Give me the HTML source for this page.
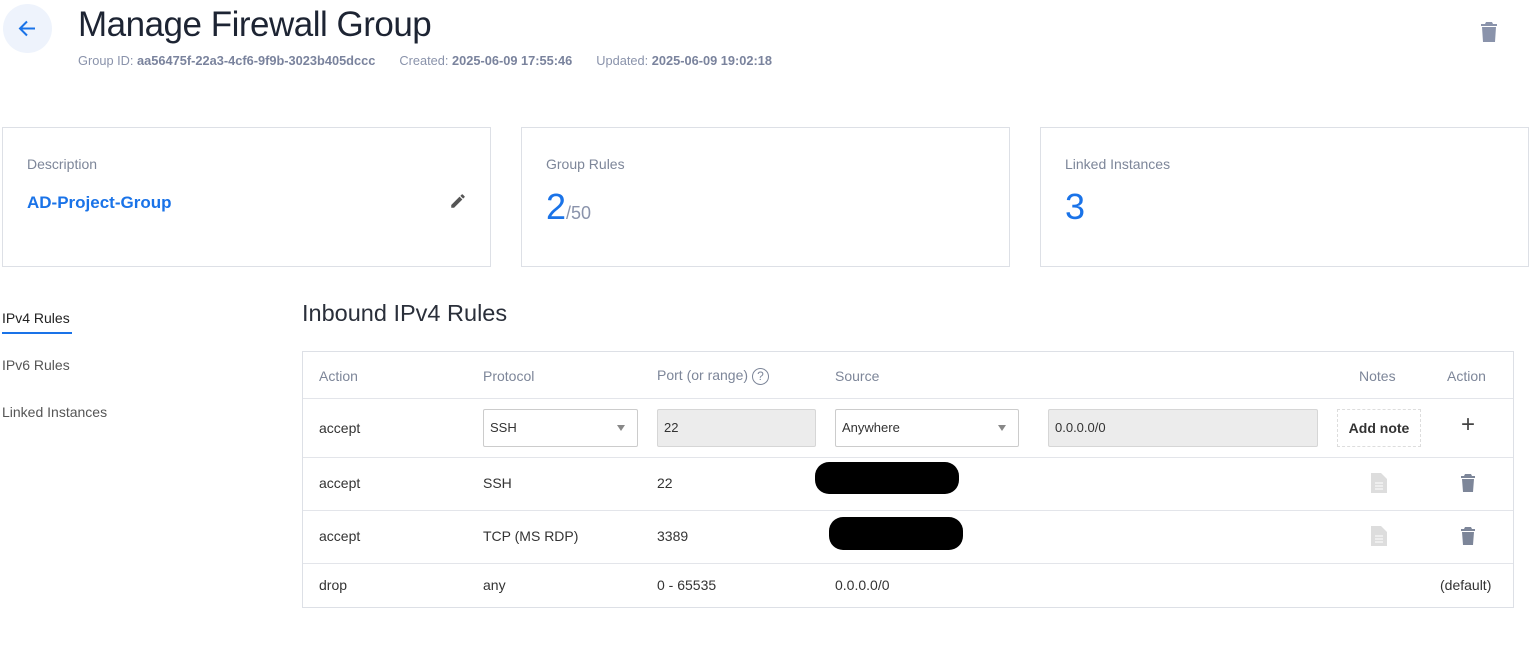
<!DOCTYPE html>
<html><head><meta charset="utf-8"><style>
*{box-sizing:border-box;margin:0;padding:0}
body{width:1534px;height:645px;background:#fff;font-family:"Liberation Sans",Arial,sans-serif;color:#333;position:relative;overflow:hidden}
.abs{position:absolute}
.back{left:3px;top:4px;width:49px;height:49px;border-radius:50%;background:#eef3fc}
h1{position:absolute;left:78px;top:5px;font-size:35px;font-weight:300;color:#1d2433;letter-spacing:-0.5px}
.meta{left:78px;top:53px;font-size:12.8px;color:#8a93ab}
.meta b{font-weight:bold;color:#7a839d}
.card{position:absolute;top:127px;height:140px;border:1px solid #dde0e6;background:#fff}
.card .lbl{position:absolute;left:24px;top:28px;font-size:14px;color:#7d8699}
.num{position:absolute;left:24px;top:58px;font-size:36px;color:#1a73e8;font-weight:300}
.num small{font-size:18px;color:#8a93ab}
.side{left:2px;font-size:14px;color:#555}
h2{position:absolute;left:302px;top:300px;font-size:23.5px;font-weight:normal;color:#2a2f3a}
.tbl{position:absolute;left:302px;top:351px;width:1212px;height:257px;border:1px solid #dde0e6}
.row{position:absolute;left:0;width:100%;border-top:1px solid #e3e5ea}
.t{position:absolute;font-size:14px;color:#333}
.h{color:#7d8699}
.inp{position:absolute;height:38px;border:1px solid #ccc;border-radius:2px;font-size:13px;padding:10px 6px;color:#333}
.gray{background:#ececec;border-color:#d6d6d6}
.tri{position:absolute;right:12px;top:15px;border-left:4px solid transparent;border-right:4px solid transparent;border-top:6px solid #888}
.blot{position:absolute;background:#000;border-radius:14px}
</style></head><body>
<div class="abs back"><svg width="49" height="49" viewBox="0 0 49 49"><path d="M32 24.5H17M24 17.5l-7 7 7 7" stroke="#1a73e8" stroke-width="2" fill="none"/></svg></div>
<h1>Manage Firewall Group</h1>
<div class="abs meta">Group ID: <b>aa56475f-22a3-4cf6-9f9b-3023b405dccc</b><span style="display:inline-block;width:24px"></span>Created: <b>2025-06-09 17:55:46</b><span style="display:inline-block;width:24px"></span>Updated: <b>2025-06-09 19:02:18</b></div>
<svg class="abs" style="left:1480px;top:22px" width="18" height="20" viewBox="0 0 18 20"><path d="M6 0h6l1 2h4v2H1V2h4zM2 5h14l-1 15H3z" fill="#8a93ab"/></svg>

<div class="card" style="left:2px;width:489px"><div class="lbl">Description</div>
<div style="position:absolute;left:24px;top:65px;font-size:17px;font-weight:bold;color:#1a73e8">AD-Project-Group</div>
<svg style="position:absolute;left:446px;top:64px" width="18" height="18" viewBox="0 0 24 24"><path d="M3 17.25V21h3.75L17.81 9.94l-3.75-3.75zM20.71 7.04a1 1 0 0 0 0-1.41l-2.34-2.34a1 1 0 0 0-1.41 0l-1.830 1.83 3.75 3.75z" fill="#555"/></svg></div>
<div class="card" style="left:521px;width:489px"><div class="lbl">Group Rules</div><div class="num">2<small>/50</small></div></div>
<div class="card" style="left:1040px;width:489px"><div class="lbl">Linked Instances</div><div class="num">3</div></div>

<div class="abs side" style="top:310px;color:#222">IPv4 Rules</div>
<div class="abs" style="left:2px;top:332px;width:70px;height:2px;background:#1a73e8"></div>
<div class="abs side" style="top:357px">IPv6 Rules</div>
<div class="abs side" style="top:404px">Linked Instances</div>

<h2>Inbound IPv4 Rules</h2>
<div class="tbl">
<div class="t h" style="left:16px;top:16px">Action</div>
<div class="t h" style="left:180px;top:16px">Protocol</div>
<div class="t h" style="left:354px;top:15px">Port (or range) <span style="display:inline-block;width:17px;height:17px;border:1.5px solid #7d8699;border-radius:50%;font-size:12px;text-align:center;line-height:14px;vertical-align:middle">?</span></div>
<div class="t h" style="left:532px;top:16px">Source</div>
<div class="t h" style="left:1056px;top:16px">Notes</div>
<div class="t h" style="left:1144px;top:16px">Action</div>

<div class="row" style="top:46px;height:60px">
<div class="t" style="left:16px;top:21px">accept</div>
<div class="inp" style="left:180px;top:10px;width:155px">SSH<span class="tri"></span></div>
<div class="inp gray" style="left:354px;top:10px;width:159px">22</div>
<div class="inp" style="left:532px;top:10px;width:184px">Anywhere<span class="tri"></span></div>
<div class="inp gray" style="left:745px;top:10px;width:270px">0.0.0.0/0</div>
<div style="position:absolute;left:1034px;top:10px;width:84px;height:38px;border:1px dashed #ddd;font-size:14px;font-weight:bold;text-align:center;line-height:36px">Add note</div>
<div class="t" style="left:1158px;top:12px;font-size:24px;color:#444">+</div>
</div>
<div class="row" style="top:105px;height:53px">
<div class="t" style="left:16px;top:17px">accept</div><div class="t" style="left:180px;top:17px">SSH</div><div class="t" style="left:354px;top:17px">22</div>
<div class="blot" style="left:512px;top:4px;width:144px;height:32px"></div>
<svg style="position:absolute;left:1068px;top:15px" width="16" height="20" viewBox="0 0 16 20"><path d="M0 0h10l6 6v14H0z" fill="#ddd"/><path d="M4 10h8M4 13h8M4 16h8" stroke="#fff"/></svg>
<svg style="position:absolute;left:1158px;top:16px" width="14" height="18" viewBox="0 0 14 18"><path d="M4 0h6l1 2h3v2H0V2h3zM1 5h12l-1 13H2z" fill="#7d8699"/></svg>
</div>
<div class="row" style="top:158px;height:53px">
<div class="t" style="left:16px;top:17px">accept</div><div class="t" style="left:180px;top:17px">TCP (MS RDP)</div><div class="t" style="left:354px;top:17px">3389</div>
<div class="blot" style="left:526px;top:6px;width:134px;height:33px"></div>
<svg style="position:absolute;left:1068px;top:15px" width="16" height="20" viewBox="0 0 16 20"><path d="M0 0h10l6 6v14H0z" fill="#ddd"/><path d="M4 10h8M4 13h8M4 16h8" stroke="#fff"/></svg>
<svg style="position:absolute;left:1158px;top:16px" width="14" height="18" viewBox="0 0 14 18"><path d="M4 0h6l1 2h3v2H0V2h3zM1 5h12l-1 13H2z" fill="#7d8699"/></svg>
</div>
<div class="row" style="top:211px;height:45px">
<div class="t" style="left:16px;top:13px">drop</div><div class="t" style="left:180px;top:13px">any</div><div class="t" style="left:354px;top:13px">0 - 65535</div><div class="t" style="left:532px;top:13px">0.0.0.0/0</div><div class="t" style="left:1137px;top:13px">(default)</div>
</div>
</div>
</body></html>
